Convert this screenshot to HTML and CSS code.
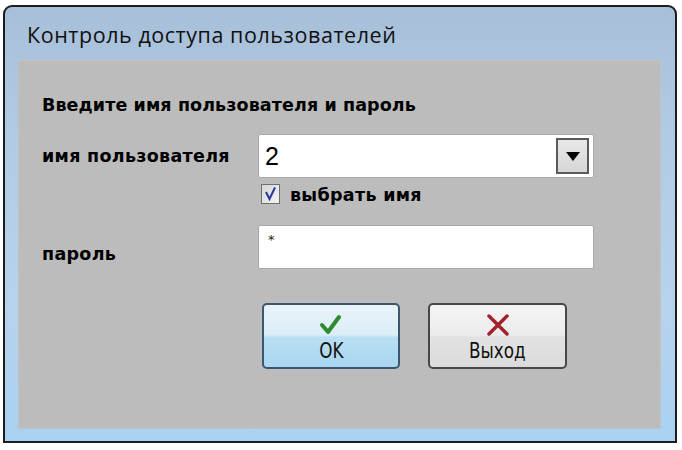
FILE: index.html
```html
<!DOCTYPE html>
<html lang="ru">
<head>
<meta charset="utf-8">
<link rel="stylesheet" href="styles.css">
</head>
<body>
<div class="window">
  <div class="titlebar">Контроль доступа пользователей</div>
  <div class="panel">
    <div class="heading">Введите имя пользователя и пароль</div>
    <div class="row row-user">
      <div class="label">имя пользователя</div>
      <div class="field combo">
        <span class="value">2</span>
        <span class="drop"><svg width="14" height="9" viewBox="0 0 14 9"><polygon points="0,0 14,0 7,9" fill="#000"/></svg></span>
      </div>
    </div>
    <div class="row row-check">
      <div class="spacer"></div>
      <span class="checkbox"><svg width="15" height="15" viewBox="0 0 15 15"><path d="M3 6 L6.5 13 L12 1.5" fill="none" stroke="#27379a" stroke-width="2"/></svg></span>
      <span class="check-label">выбрать имя</span>
    </div>
    <div class="row row-pass">
      <div class="label label-pass">пароль</div>
      <div class="field pass"><span class="star">*</span></div>
    </div>
    <div class="buttons">
      <div class="spacer-btn"></div>
      <div class="btn ok">
        <svg width="24" height="22" viewBox="0 0 24 22"><path d="M3 11 L9 18 L20 3" fill="none" stroke="#2e8b2e" stroke-width="4" stroke-linecap="round" stroke-linejoin="round"/></svg>
        <span class="btn-text">OK</span>
      </div>
      <div class="btn exit">
        <svg width="24" height="22" viewBox="0 0 24 22"><path d="M3 2 L21 20 M21 2 L3 20" fill="none" stroke="#a3222c" stroke-width="3.5" stroke-linecap="round"/></svg>
        <span class="btn-text">Выход</span>
      </div>
    </div>
  </div>
</div>
</body>
</html>
```
FILE: styles.css
```css
html, body {
  margin: 0;
  padding: 0;
  background: #ffffff;
}
body {
  padding: 5px 0 0 3px;
  width: 682px;
  height: 450px;
  box-sizing: border-box;
}
.window {
  width: 674px;
  height: 438px;
  box-sizing: border-box;
  border: 2px solid #1c1c1c;
  border-radius: 9px 9px 0 0;
  background: linear-gradient(to bottom, #a7bfd8 0%, #b2cbe4 30%, #b7d3ed 70%, #a9d1f1 100%);
  display: flex;
  flex-direction: column;
  padding: 0 14px 12px 13px;
}
.titlebar {
  height: 53px;
  flex: none;
  display: flex;
  align-items: center;
  padding-left: 9px;
  padding-top: 2px;
  box-sizing: border-box;
  font-family: "Open Sans", "Noto Sans", sans-serif;
  font-size: 21.5px;
  color: #111;
  letter-spacing: 0.55px;
}
.panel {
  flex: 1;
  background: #bcbcbc;
  box-shadow: inset 0 0 0 1px #c2c2c2;
  padding-left: 24px;
  font-family: "DejaVu Sans", sans-serif;
  font-weight: bold;
  color: #000;
}
.heading {
  margin-top: 33px;
  height: 24px;
  line-height: 24px;
  font-size: 17.5px;
  letter-spacing: 0.1px;
}
.row {
  display: flex;
  align-items: center;
}
.row-user {
  margin-top: 17px;
}
.label {
  width: 216px;
  font-size: 17.5px;
  letter-spacing: 0.3px;
}
.label-pass {
  padding-top: 14px;
}
.field {
  width: 336px;
  height: 44px;
  box-sizing: border-box;
  background: #ffffff;
  border: 1px solid #a8a8a8;
  border-radius: 2px;
  display: flex;
  align-items: center;
}
.combo .value {
  flex: 1;
  padding-left: 6px;
  font-family: "Liberation Sans", sans-serif;
  font-weight: normal;
  font-size: 25px;
}
.drop {
  width: 33px;
  height: 36px;
  margin-right: 4px;
  box-sizing: border-box;
  border: 2px solid #5a5a5a;
  background: linear-gradient(to bottom, #e8e8e8, #d6d6d6);
  display: flex;
  align-items: center;
  justify-content: center;
}
.row-check {
  margin-top: 5px;
  height: 21px;
}
.spacer {
  width: 219px;
}
.checkbox {
  width: 19px;
  height: 20px;
  box-sizing: border-box;
  border: 1px solid #6f6f6f;
  background: linear-gradient(135deg, #d7d7d7, #f4f4f4);
  display: flex;
  align-items: center;
  justify-content: center;
}
.check-label {
  margin-left: 10px;
  font-size: 17.5px;
  letter-spacing: 0.3px;
  padding-top: 3px;
}
.row-pass {
  margin-top: 21px;
}
.pass {
  align-items: flex-start;
}
.star {
  padding-left: 9px;
  padding-top: 6px;
  font-size: 13px;
  font-weight: normal;
  color: #222;
}
.buttons {
  display: flex;
  margin-top: 34px;
}
.spacer-btn {
  width: 220px;
}
.btn {
  height: 66px;
  box-sizing: border-box;
  border-radius: 5px;
  display: flex;
  flex-direction: column;
  align-items: center;
  padding-top: 9px;
}
.btn svg {
  display: block;
}
.ok {
  width: 138px;
  border: 2px solid #3b566e;
  background: linear-gradient(to bottom, #e9f3f9 0%, #dcedf7 48%, #b9dff4 52%, #a9d6f1 100%);
}
.exit {
  width: 139px;
  margin-left: 28px;
  border: 2px solid #474747;
  background: linear-gradient(to bottom, #f4f4f4 0%, #ececec 48%, #e2e2e2 52%, #dbdbdb 100%);
}
.btn-text {
  margin-top: 3px;
  font-family: "DejaVu Sans Condensed", "DejaVu Sans", sans-serif;
  font-stretch: condensed;
  font-weight: normal;
  font-size: 22px;
  line-height: 24px;
  color: #111;
  transform: scaleX(0.85);
}
```
